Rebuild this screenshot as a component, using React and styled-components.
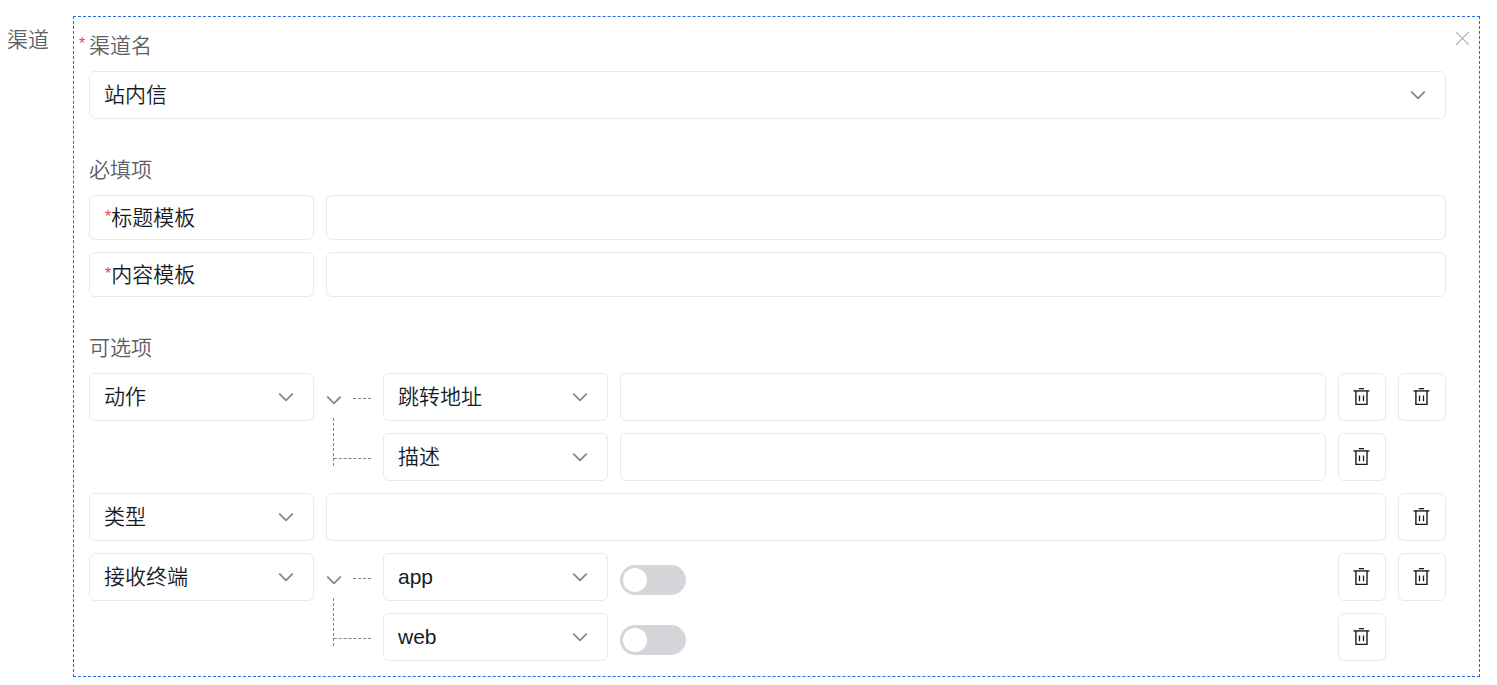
import React, { useState } from "react"
import styled, { createGlobalStyle } from 'styled-components';

const colors = {
    text: '#151b26',
    label: '#5c5f66',
    icon: '#84868c',
    line: '#e8e9eb',
    primary: '#2468f2',
    danger: '#f33e3e',
    off: '#d4d5d8',
    close: '#b8babf',
}

const GlobalStyle = createGlobalStyle`
    *, *::before, *::after{
        box-sizing: border-box;
    }
    body{
        margin: 0;
        background: #fff;
        color: ${colors.text};
        font-family: "Liberation Sans", "Noto Sans CJK SC", sans-serif;
        font-weight: 350;
        font-size: 21px;
        line-height: 30px;
    }
    button, input, select{
        font: inherit;
        color: inherit;
    }
`

const Page = styled.div`
    display: grid;
    grid-template-columns: 66px minmax(0, 1fr);
    padding: 16px 17px 8px 7px;
`
const PageLabel = styled.div`
    padding-top: 9px;
    color: ${colors.label};
`
const Panel = styled.section`
    position: relative;
    display: flex;
    flex-direction: column;
    gap: 36px;
    padding: 14px 33px 15px 5px;
    border: dashed 1px ${colors.primary};
`
const Close = styled.button`
    position: absolute;
    top: 14px;
    right: 9px;
    display: flex;
    padding: 0;
    border: none;
    background: none;
    color: ${colors.close};
    cursor: pointer;
`

/* the first column holds the required mark */
const Field = styled.div`
    display: grid;
    grid-template-columns: 10px minmax(0, 1fr);
    row-gap: 10px;
`
const FieldLabel = styled.label`
    grid-column: 2;
    color: ${colors.label};
`
const Mark = styled.span`
    font-size: 16px;
    line-height: 26px;
    vertical-align: 3px;
    color: ${colors.danger};
`
const Rows = styled.div`
    grid-column: 2;
    display: flex;
    flex-direction: column;
    gap: 12px;
    min-width: 0;
`
const Row = styled.div`
    display: flex;
    align-items: flex-start;
    gap: 12px;
`

const SelectBox = styled.div`
    display: grid;
    flex: none;
    align-items: center;
    width: ${({wide})=>wide ? "100%" : "225px"};
    svg{
        grid-area: 1 / 1;
        justify-self: end;
        margin-right: 20px;
        color: ${colors.icon};
        pointer-events: none;
    }
`
const StyledSelect = styled.select`
    grid-area: 1 / 1;
    appearance: none;
    width: 100%;
    height: 48px;
    padding: 0 42px 0 14px;
    border: solid 1px ${colors.line};
    border-radius: 6px;
    background: #fff;
    outline: none;
    cursor: pointer;
    &:hover, &:focus{
        border-color: ${colors.primary};
    }
`
const KeyLabel = styled.label`
    flex: none;
    width: 225px;
    height: 45px;
    padding: 7px 15px;
    border: solid 1px ${colors.line};
    border-radius: 6px;
`
const Input = styled.input`
    flex: 1;
    min-width: 0;
    height: ${({low})=>low ? "45px" : "48px"};
    padding: 0 14px;
    border: solid 1px ${colors.line};
    border-radius: 6px;
    background: #fff;
    outline: none;
    &:hover, &:focus{
        border-color: ${colors.primary};
    }
`
const IconButton = styled.button`
    display: flex;
    flex: none;
    align-items: center;
    justify-content: center;
    width: 48px;
    height: 48px;
    padding: 0;
    border: solid 1px ${colors.line};
    border-radius: 6px;
    background: #fff;
    cursor: pointer;
    &:hover{
        border-color: ${colors.primary};
    }
`

const Tree = styled.div`
    flex: none;
    width: 45px;
    padding-top: 9px;
`
const TreeHead = styled.div`
    display: flex;
    align-items: center;
    justify-content: space-between;
    height: 36px;
`
const Toggle = styled.button`
    display: flex;
    padding: 0;
    border: none;
    background: none;
    color: ${colors.icon};
    cursor: pointer;
`
const Dash = styled.span`
    width: ${({full})=>full ? "100%" : "18px"};
    height: 4px;
    border-top: dashed 1px ${colors.icon};
`
const Stem = styled.div`
    display: flex;
    height: 48px;
    margin-left: 7px;
    padding-top: 40px;
    border-left: dashed 1px ${colors.icon};
`
const Members = styled.div`
    display: flex;
    flex: 1;
    flex-direction: column;
    gap: 12px;
    min-width: 0;
`

const SwitchCell = styled.div`
    display: flex;
    flex: 1;
    padding-top: 12px;
`
const Switch = styled.input`
    appearance: none;
    width: 66px;
    height: 30px;
    margin: 0;
    padding: 3px;
    border-radius: 15px;
    background: ${colors.off};
    cursor: pointer;
    &::before{
        content: "";
        display: block;
        width: 24px;
        height: 24px;
        border-radius: 50%;
        background: #fff;
    }
    &:checked{
        background: ${colors.primary};
    }
    &:checked::before{
        margin-left: auto;
    }
`

const Chevron = ()=>(
    <svg width="16" height="16" viewBox="0 0 16 16" fill="none" stroke="currentColor" strokeWidth="1.8" strokeLinejoin="round">
        <path d="M1.3 4.6 8 11.3 14.7 4.6"/>
    </svg>
)

const Cross = ()=>(
    <svg width="16" height="16" viewBox="0 0 16 16" fill="none" stroke="currentColor" strokeWidth="1.3">
        <path d="M1.8 0.8 15 14M15 0.8 1.8 14"/>
    </svg>
)

const Trash = ()=>(
    <svg width="18" height="18" viewBox="0 0 18 18" fill="none" stroke="currentColor" strokeWidth="1.4">
        <path d="M5.8 0.6H11"/>
        <path d="M0.5 2.9H16.4"/>
        <path d="M2.9 3V16.4H14V3"/>
        <path d="M6.5 7.6V13.2M10.5 7.6V13.2" strokeWidth="1.3"/>
    </svg>
)

const Select = ({id, label, value, wide})=>(
    <SelectBox wide={wide ? 1 : undefined}>
        <StyledSelect id={id} aria-label={label} defaultValue={value}>
            <option>{value}</option>
        </StyledSelect>
        <Chevron/>
    </SelectBox>
)

const Delete = ({name})=>(
    <IconButton type="button" aria-label={`删除${name}`}><Trash/></IconButton>
)

const required = [
    {id: 'title', name: '标题模板'},
    {id: 'content', name: '内容模板'},
]

const optional = [
    {name: '动作', members: [{name: '跳转地址'}, {name: '描述'}]},
    {name: '类型'},
    {name: '接收终端', members: [{name: 'app', toggle: true}, {name: 'web', toggle: true}]},
]

const Group = ({name, members})=>{
    const [open, setOpen] = useState(true);
    return (
        <Row>
            <Select label="参数" value={name}/>
            <Tree>
                <TreeHead>
                    <Toggle type="button" aria-label="展开" aria-expanded={open} onClick={()=>setOpen(!open)}>
                        <Chevron/>
                    </Toggle>
                    <Dash/>
                </TreeHead>
                {open && <Stem><Dash full={1}/></Stem>}
            </Tree>
            <Members>
                {members.slice(0, open ? members.length : 1).map(m=>(
                    <Row key={m.name}>
                        <Select label="子参数" value={m.name}/>
                        {m.toggle
                            ? <SwitchCell><Switch type="checkbox" role="switch" aria-label={m.name}/></SwitchCell>
                            : <Input type="text" aria-label={m.name}/>}
                        <Delete name={m.name}/>
                    </Row>
                ))}
            </Members>
            <Delete name={name}/>
        </Row>
    )
}

const App = ()=>(
    <>
    <GlobalStyle/>
    <Page>
        <PageLabel>渠道</PageLabel>
        <Panel>
            <Field>
                <Mark>*</Mark>
                <FieldLabel htmlFor="channel">渠道名</FieldLabel>
                <Rows>
                    <Select id="channel" value="站内信" wide/>
                </Rows>
            </Field>
            <Field>
                <FieldLabel as="div">必填项</FieldLabel>
                <Rows>
                    {required.map(r=>(
                        <Row key={r.id}>
                            <KeyLabel htmlFor={r.id}><Mark>*</Mark>{r.name}</KeyLabel>
                            <Input id={r.id} type="text" low={1}/>
                        </Row>
                    ))}
                </Rows>
            </Field>
            <Field>
                <FieldLabel as="div">可选项</FieldLabel>
                <Rows>
                    {optional.map(o=>o.members
                        ? <Group key={o.name} {...o}/>
                        : (
                            <Row key={o.name}>
                                <Select label="参数" value={o.name}/>
                                <Input type="text" aria-label={o.name}/>
                                <Delete name={o.name}/>
                            </Row>
                        )
                    )}
                </Rows>
            </Field>
            <Close type="button" aria-label="关闭"><Cross/></Close>
        </Panel>
    </Page>
    </>
)

export default App
